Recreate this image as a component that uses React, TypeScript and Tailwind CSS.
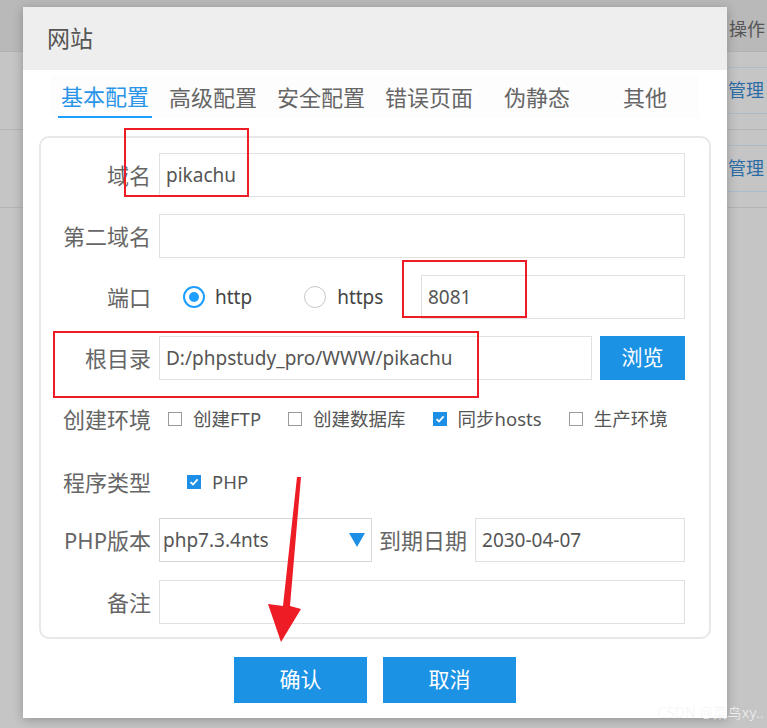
import React from "react";

const font = { fontFamily: '"Noto Sans", "Noto Sans CJK SC", sans-serif' };

const Label: React.FC<{ text: string }> = ({ text }) => (
  <div className="w-[118px] shrink-0 pr-[8px] text-right text-[22px] text-[#666]">{text}</div>
);

const Box: React.FC<{ value?: string; className?: string }> = ({ value, className }) => (
  <div
    className={`flex h-[44px] items-center border border-[#e1e1e1] bg-white px-[6px] text-[19px] text-[#555] ${className ?? "flex-1"}`}
  >
    {value}
  </div>
);

const Check: React.FC<{ checked?: boolean }> = ({ checked }) =>
  checked ? (
    <span className="flex h-[14px] w-[14px] items-center justify-center bg-[#1e8fe6]">
      <svg width="10" height="10" viewBox="0 0 10 10">
        <path d="M1.5 5.2 L4 7.5 L8.6 2.4" stroke="white" strokeWidth="1.8" fill="none" />
      </svg>
    </span>
  ) : (
    <span className="h-[14px] w-[14px] border border-[#9a9a9a] bg-white" />
  );

const CheckItem: React.FC<{ label: string; checked?: boolean }> = ({ label, checked }) => (
  <div className="flex items-center gap-[11px] text-[18.5px] text-[#555]">
    <Check checked={checked} />
    <span>{label}</span>
  </div>
);

const tabs = ["基本配置", "高级配置", "安全配置", "错误页面", "伪静态", "其他"];

export default function App() {
  return (
    <div className="relative h-[728px] w-[767px] overflow-hidden bg-[#c5c5c5]" style={font}>
      {/* page behind the dialog */}
      <div className="flex h-[52px] items-end justify-end border-b border-[#b2b2b2] bg-[#b9b9b9] pb-[8px]">
        <span className="w-[38px] text-[18px] text-[#555]">操作</span>
      </div>
      <div className="flex h-[78px] items-center justify-end border-b border-[#b5b5b5]">
        <span className="flex h-[47px] w-[39px] items-center border-y border-[#a9bccb] text-[18px] text-[#2c6ca6]">管理</span>
      </div>
      <div className="flex h-[78px] items-center justify-end border-b border-[#b5b5b5]">
        <span className="flex h-[47px] w-[39px] items-center border-y border-[#a9bccb] text-[18px] text-[#2c6ca6]">管理</span>
      </div>

      {/* dialog */}
      <div className="absolute left-[23px] top-[7px] flex h-[711px] w-[704px] flex-col bg-white shadow-[0_2px_10px_rgba(0,0,0,0.25)]">
        <div className="flex h-[63px] items-center bg-[#eeeeee] pl-[24px] text-[23px] text-[#555]">网站</div>

        <div className="mt-[6px] flex h-[42px] pl-[28px]">
          {tabs.map((t, i) => (
            <div key={t} className="flex w-[108px] justify-center bg-[#fdfdfd]">
              <span
                className={`flex h-full items-center px-[3px] text-[22px] ${
                  i === 0 ? "border-b-2 border-[#1e9fff] text-[#2a95e8]" : "text-[#666]"
                }`}
              >
                {t}
              </span>
            </div>
          ))}
        </div>

        <div className="mx-[16px] mt-[18px] flex flex-col rounded-[10px] border-2 border-[#e8e8e8] pb-[13px] pr-[24px] pt-[15px]">
          <div className="flex items-center">
            <Label text="域名" />
            <Box value="pikachu" />
          </div>
          <div className="mt-[17px] flex items-center">
            <Label text="第二域名" />
            <Box />
          </div>
          <div className="mt-[17px] flex items-center">
            <Label text="端口" />
            <div className="ml-[24px] flex items-center gap-[10px] text-[19px] text-[#444]">
              <span className="flex h-[22px] w-[22px] items-center justify-center rounded-full border-2 border-[#1e9fff]">
                <span className="h-[10px] w-[10px] rounded-full bg-[#1e9fff]" />
              </span>
              <span>http</span>
            </div>
            <div className="ml-[52px] flex items-center gap-[11px] text-[19px] text-[#444]">
              <span className="h-[22px] w-[22px] rounded-full border border-[#c8c8c8]" />
              <span>https</span>
            </div>
            <Box value="8081" className="ml-auto w-[264px]" />
          </div>
          <div className="mt-[17px] flex items-center">
            <Label text="根目录" />
            <Box value="D:/phpstudy_pro/WWW/pikachu" />
            <div className="ml-[8px] flex h-[44px] w-[85px] items-center justify-center bg-[#1b92e4] text-[21px] text-white">
              浏览
            </div>
          </div>
          <div className="mt-[17px] flex h-[44px] items-center">
            <Label text="创建环境" />
            <div className="ml-[9px] flex items-center gap-[27px]">
              <CheckItem label="创建FTP" />
              <CheckItem label="创建数据库" />
              <CheckItem label="同步hosts" checked />
              <CheckItem label="生产环境" />
            </div>
          </div>
          <div className="mt-[19px] flex h-[44px] items-center">
            <Label text="程序类型" />
            <div className="ml-[28px]">
              <CheckItem label="PHP" checked />
            </div>
          </div>
          <div className="mt-[14px] flex items-center">
            <Label text="PHP版本" />
            <div className="flex h-[44px] w-[213px] items-center justify-between border border-[#d6d6d6] pl-[3px] pr-[6px] text-[19px] text-[#555]">
              <span>php7.3.4nts</span>
              <svg width="16" height="16" viewBox="0 0 16 16">
                <path d="M0 1 L16 1 L8 15 Z" fill="#1e8fe6" />
              </svg>
            </div>
            <div className="ml-[7px] text-[22px] text-[#666]">到期日期</div>
            <Box value="2030-04-07" className="ml-[8px] flex-1" />
          </div>
          <div className="mt-[18px] flex items-center">
            <Label text="备注" />
            <Box />
          </div>
        </div>

        <div className="mt-[18px] flex justify-center gap-[16px]">
          <div className="flex h-[46px] w-[133px] items-center justify-center bg-[#1b92e4] text-[21px] text-white">确认</div>
          <div className="flex h-[46px] w-[133px] items-center justify-center bg-[#1b92e4] text-[21px] text-white">取消</div>
        </div>
      </div>

      {/* annotations */}
      <div className="absolute left-[124px] top-[128px] h-[69px] w-[125px] border-2 border-[#ee1c25]" />
      <div className="absolute left-[402px] top-[260px] h-[58px] w-[125px] border-2 border-[#ee1c25]" />
      <div className="absolute left-[53px] top-[331px] h-[67px] w-[426px] border-2 border-[#ee1c25]" />
      <svg className="absolute left-0 top-0" width="767" height="728">
        <polygon points="297,477 301,477 290,606 301,609 281,642 268,604 283,606" fill="#ee1c25" />
      </svg>
      <div className="absolute bottom-[5px] right-[3px] text-[14px] font-light tracking-[0.5px] text-[#f4f4f4]">
        CSDN @菜鸟xy..
      </div>
    </div>
  );
}
